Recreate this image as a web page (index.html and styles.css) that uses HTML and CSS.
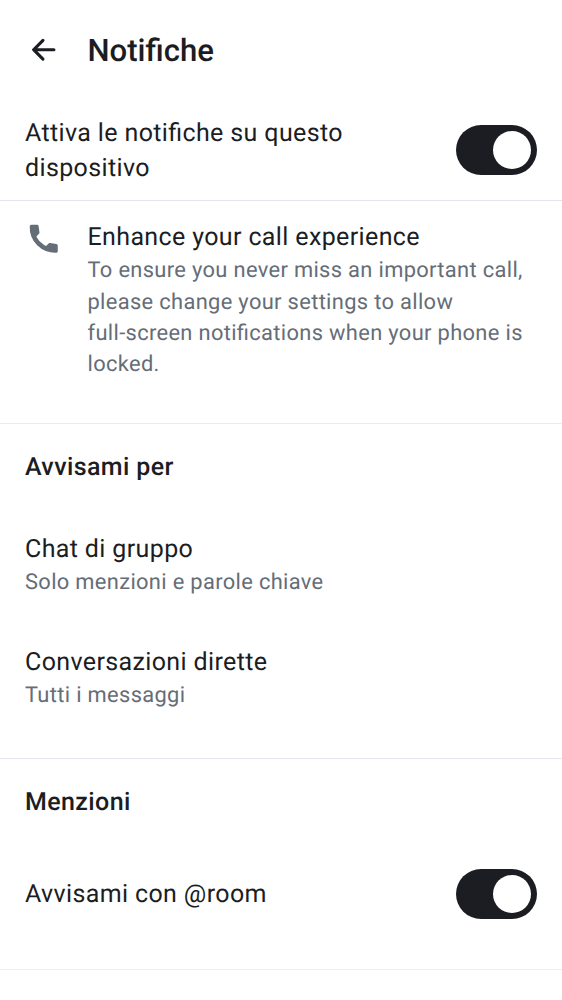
FILE: index.html
```html
<!DOCTYPE html>
<html lang="it">
<head>
<meta charset="utf-8">
<title>Notifiche</title>
<link rel="stylesheet" href="styles.css">
</head>
<body>
<header class="bar">
<svg class="back" viewBox="0 0 24 24"><path d="M12.207 5.293a1 1 0 0 1 0 1.414L7.914 11H18.5a1 1 0 1 1 0 2H7.914l4.293 4.293a1 1 0 0 1-1.414 1.414l-6-6a1 1 0 0 1 0-1.414l6-6a1 1 0 0 1 1.414 0"/></svg>
<h1>Notifiche</h1>
</header>
<main>
<section class="enable">
<p class="label">Attiva le notifiche su questo<br>dispositivo</p>
<span class="switch"></span>
</section>
<section class="call">
<svg class="phone" viewBox="0 0 24 24"><path d="m20.958 16.374.039 3.527c0 .285-.11.537-.33.756-.22.22-.472.33-.756.33a15.97 15.97 0 0 1-6.57-1.105 16.223 16.223 0 0 1-5.563-3.663 16.084 16.084 0 0 1-3.653-5.573 16.313 16.313 0 0 1-1.115-6.56c0-.285.11-.537.33-.757.22-.22.471-.329.755-.329l3.528.039a1.069 1.069 0 0 1 1.085.93l.543 3.954c.026.181.013.349-.039.504a1.088 1.088 0 0 1-.271.426l-1.64 1.64c.337.672.721 1.308 1.154 1.909.433.6 1.444 1.696 1.444 1.696s1.095 1.01 1.696 1.444c.6.433 1.237.817 1.909 1.153l1.64-1.64c.116-.116.258-.206.426-.271.155-.052.323-.065.504-.039l3.954.543c.258.026.475.142.649.349.174.207.265.452.271.736Z"/></svg>
<div class="details">
<p class="label">Enhance your call experience</p>
<p class="sub">To ensure you never miss an important call,<br>please change your settings to allow<br>full-screen notifications when your phone is<br>locked.</p>
</div>
</section>
<section class="notify">
<h2>Avvisami per</h2>
<div class="item"><p class="label">Chat di gruppo</p><p class="sub">Solo menzioni e parole chiave</p></div>
<div class="item"><p class="label">Conversazioni dirette</p><p class="sub">Tutti i messaggi</p></div>
</section>
<section class="mentions">
<h2>Menzioni</h2>
<div class="row"><p class="label">Avvisami con @room</p><span class="switch"></span></div>
</section>
</main>
</body>
</html>
```
FILE: styles.css
```css
* { box-sizing: border-box; margin: 0; padding: 0; }
body { width: 562px; height: 1000px; overflow: hidden; background: #fff; color: #1b1d22; font-family: Roboto, sans-serif; font-feature-settings: "liga" 1; text-rendering: geometricPrecision; white-space: nowrap; }
.bar { display: flex; align-items: center; height: 100px; padding-left: 25px; gap: 25px; }
.back { width: 37.5px; height: 37.5px; fill: #1b1d22; }
h1 { padding-top: 2px; font-size: 31.1px; font-weight: 500; line-height: 40px; }
.label { font-size: 25px; line-height: 34.4px; letter-spacing: .37px; }
.sub { font-size: 21.875px; line-height: 31.25px; letter-spacing: .34px; color: #656d77; }
h2 { font-size: 25px; line-height: 34px; font-weight: 500; letter-spacing: .39px; }
section { border-bottom: 1px solid #e3e6ed; }
.enable { display: flex; justify-content: space-between; align-items: center; height: 101px; padding: 0 25px; }
.enable .label { padding-top: 3px; }
.switch { display: flex; justify-content: flex-end; align-items: center; width: 81px; height: 50px; padding-right: 6px; border-radius: 25px; background: #1b1d22; }
.switch::after { content: ""; width: 38px; height: 38px; border-radius: 50%; background: #fff; }
.call { display: flex; gap: 25px; height: 223px; padding: 19px 25px 0; border-color: #ebebeb; }
.details { padding-top: 1px; }
.phone { width: 37.5px; height: 37.5px; fill: #656d77; }
.notify { height: 335px; padding: 27px 25px 0; }
.notify h2 { margin-bottom: 48px; }
.item { height: 112.5px; }
.mentions { height: 211px; padding: 27px 25px 0; border-color: #efefef; }
.row { display: flex; align-items: center; justify-content: space-between; margin-top: 49px; }
.row .label { padding-top: 2px; }
```
